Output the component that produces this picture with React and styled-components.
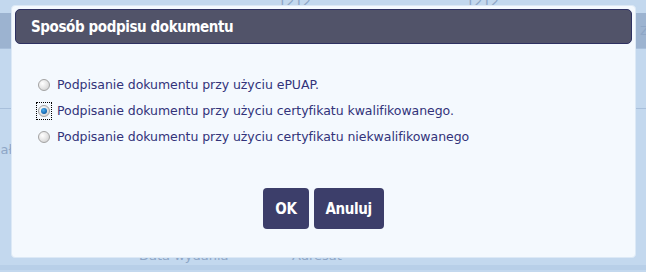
import styled, { createGlobalStyle } from "styled-components";

const GlobalStyle = createGlobalStyle`
  html, body {
    margin: 0;
    padding: 0;
    background: #c3d8ee;
  }
`;

const Page = styled.div`
  position: relative;
  width: 646px;
  height: 272px;
  overflow: hidden;
  background: #c3d8ee;
  font-family: "DejaVu Sans", Verdana, sans-serif;
`;

const BgTable = styled.div`
  display: flex;
  flex-direction: column;
  color: #8ea6c6;
  font-size: 13px;
  line-height: 15px;
`;

const BgRow = styled.div`
  display: flex;
  height: ${(p) => p.h}px;
  align-items: ${(p) => p.align || "center"};
  background: ${(p) => p.bg || "transparent"};
  border-bottom: ${(p) => (p.line ? "1px solid #a8bfdb" : "none")};
`;

const BgCell = styled.div`
  flex: none;
  width: ${(p) => p.w}px;
  white-space: nowrap;
`;

const Overlay = styled.div`
  position: absolute;
  left: 11px;
  top: 5px;
  width: 625px;
  height: 253px;
`;

const Dialog = styled.div`
  box-sizing: border-box;
  width: 100%;
  height: 100%;
  background: #f4f9fe;
  border: 1px solid #dce9f6;
  border-radius: 4px;
  padding: 3px 3px 0 3px;
  display: flex;
  flex-direction: column;
`;

const TitleBar = styled.div`
  box-sizing: border-box;
  height: 35px;
  background: #515369;
  border: 1px solid #2e3162;
  border-radius: 5px;
  display: flex;
  align-items: center;
  padding-left: 15px;
`;

const Title = styled.h2`
  margin: 0;
  color: #ffffff;
  font-family: "DejaVu Sans Condensed", "DejaVu Sans", sans-serif;
  font-weight: bold;
  font-size: 15px;
  letter-spacing: -0.4px;
`;

const Options = styled.div`
  display: flex;
  flex-direction: column;
  gap: 13px;
  padding: 34px 0 0 22px;
`;

const Option = styled.label`
  display: flex;
  align-items: center;
  gap: 6px;
  height: 13px;
  color: #32337a;
  font-size: 12.5px;
  letter-spacing: -0.05px;
  cursor: pointer;
`;

const RadioWrap = styled.span`
  display: inline-flex;
  align-items: center;
  justify-content: center;
  width: 14px;
  height: 16px;
  outline: ${(p) => (p.focused ? "1px dotted #000" : "none")};
  outline-offset: 0;
`;

const Radio = styled.span`
  box-sizing: border-box;
  width: 12px;
  height: 12px;
  border-radius: 50%;
  border: 1px solid #a3a3a3;
  background: radial-gradient(circle at 35% 35%, #ffffff 0%, #e8e8e8 45%, #c9c9c9 100%);
  display: inline-flex;
  align-items: center;
  justify-content: center;

  &::after {
    content: "";
    width: 6px;
    height: 6px;
    border-radius: 50%;
    background: radial-gradient(circle at 40% 35%, #4fb0ee 0%, #1a6fb8 60%, #0d3f78 100%);
    display: ${(p) => (p.checked ? "block" : "none")};
  }
`;

const Buttons = styled.div`
  display: flex;
  justify-content: center;
  gap: 5px;
  margin-top: 45px;
`;

const Button = styled.button`
  box-sizing: border-box;
  height: 41px;
  padding: 0 12px;
  background: #3c3e6a;
  color: #ffffff;
  border: none;
  border-radius: 4px;
  font-family: "DejaVu Sans Condensed", "DejaVu Sans", sans-serif;
  font-weight: bold;
  font-size: 15px;
  letter-spacing: -0.4px;
  cursor: pointer;
`;

const options = [
  { label: "Podpisanie dokumentu przy użyciu ePUAP.", checked: false },
  { label: "Podpisanie dokumentu przy użyciu certyfikatu kwalifikowanego.", checked: true },
  { label: "Podpisanie dokumentu przy użyciu certyfikatu niekwalifikowanego", checked: false },
];

export default function App() {
  return (
    <>
      <GlobalStyle />
      <Page>
        <BgTable>
          <BgRow h={13} align="flex-start">
            <BgCell w={278} />
            <BgCell w={188} style={{ marginTop: -6 }}>1212</BgCell>
            <BgCell w={60} style={{ marginTop: -6 }}>1212</BgCell>
          </BgRow>
          <BgRow h={35} bg="#9cb3d0" line>
            <BgCell w={640} />
            <BgCell w={20}>Z</BgCell>
          </BgRow>
          <BgRow h={59} line />
          <BgRow h={80}>
            <BgCell w={40} style={{ marginLeft: -24 }}>Kanał</BgCell>
          </BgRow>
          <BgRow h={64} />
          <BgRow h={12} align="flex-start">
            <BgCell w={139} />
            <BgCell w={153} style={{ marginTop: -5 }}>Data wydania</BgCell>
            <BgCell w={100} style={{ marginTop: -5 }}>Adresat</BgCell>
          </BgRow>
          <BgRow h={5} bg="#b8cfe8" />
        </BgTable>
        <Overlay>
          <Dialog>
            <TitleBar>
              <Title>Sposób podpisu dokumentu</Title>
            </TitleBar>
            <Options>
              {options.map((o) => (
                <Option key={o.label}>
                  <RadioWrap focused={o.checked}>
                    <Radio checked={o.checked} />
                  </RadioWrap>
                  {o.label}
                </Option>
              ))}
            </Options>
            <Buttons>
              <Button>OK</Button>
              <Button>Anuluj</Button>
            </Buttons>
          </Dialog>
        </Overlay>
      </Page>
    </>
  );
}
